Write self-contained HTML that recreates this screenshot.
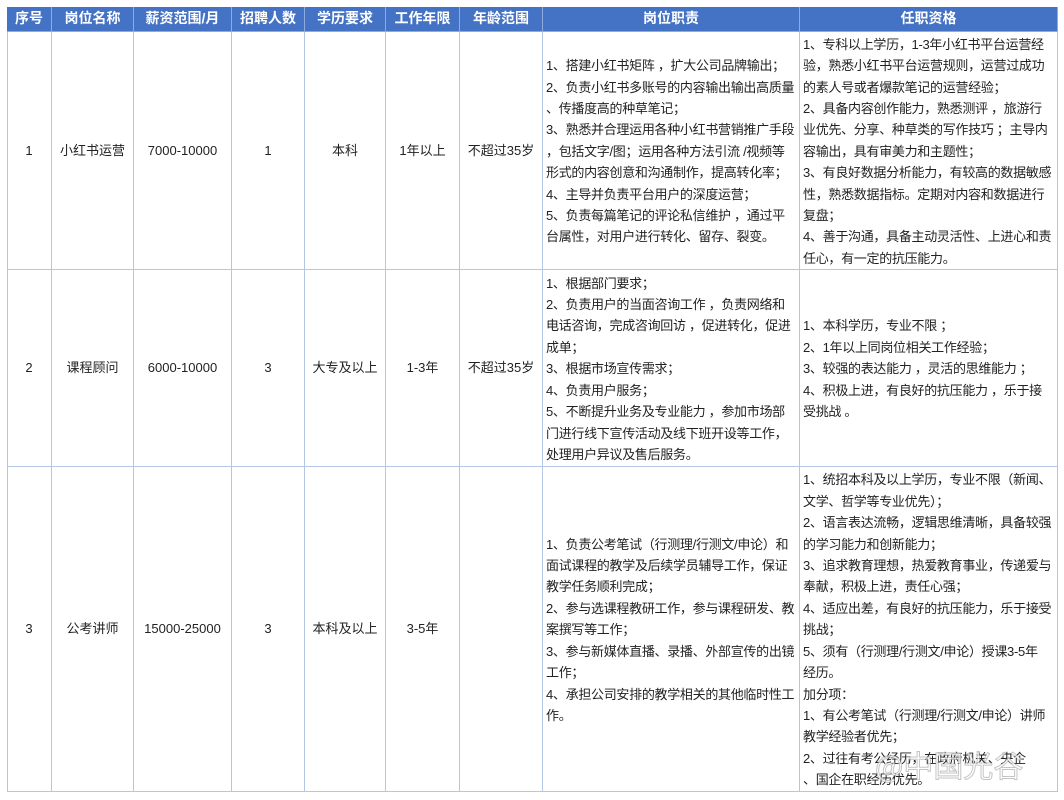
<!DOCTYPE html>
<html><head><meta charset="utf-8"><style>
body{margin:0;width:1064px;height:800px;background:#fff;position:relative;overflow:hidden;font-family:"Liberation Sans","Noto Sans CJK SC",sans-serif;color:#222}
.c{position:absolute;box-sizing:border-box;border-right:1px solid #b4c6e7;border-bottom:1px solid #b4c6e7;display:flex;align-items:center;font-size:13px;line-height:21.4px;white-space:nowrap;overflow:hidden}
.h{background:#4472c4;color:#fff;font-weight:bold;font-size:14px;justify-content:center;border-color:#8faadc}
.m{justify-content:center}
.t{padding-left:3px;letter-spacing:-0.3px;padding-top:2px}
.wm{position:absolute;left:875px;top:742px;font-size:30px;color:rgba(255,255,255,.7);-webkit-text-stroke:1px rgba(140,140,140,.5);white-space:nowrap;font-family:"Noto Sans CJK SC",sans-serif}
</style></head><body>
<div style="position:absolute;left:7px;top:7px;width:1051px;height:785px;border-left:1px solid #b4c6e7;border-top:1px solid #8faadc;box-sizing:border-box"></div>
<div class="c h" style="left:7px;top:7px;width:45px;height:25px">序号</div>
<div class="c h" style="left:52px;top:7px;width:82px;height:25px">岗位名称</div>
<div class="c h" style="left:134px;top:7px;width:98px;height:25px">薪资范围/月</div>
<div class="c h" style="left:232px;top:7px;width:73px;height:25px">招聘人数</div>
<div class="c h" style="left:305px;top:7px;width:81px;height:25px">学历要求</div>
<div class="c h" style="left:386px;top:7px;width:74px;height:25px">工作年限</div>
<div class="c h" style="left:460px;top:7px;width:83px;height:25px">年龄范围</div>
<div class="c h" style="left:543px;top:7px;width:257px;height:25px">岗位职责</div>
<div class="c h" style="left:800px;top:7px;width:258px;height:25px">任职资格</div>
<div class="c m" style="left:7px;top:32px;width:45px;height:238px">1</div>
<div class="c m" style="left:52px;top:32px;width:82px;height:238px">小红书运营</div>
<div class="c m" style="left:134px;top:32px;width:98px;height:238px">7000-10000</div>
<div class="c m" style="left:232px;top:32px;width:73px;height:238px">1</div>
<div class="c m" style="left:305px;top:32px;width:81px;height:238px">本科</div>
<div class="c m" style="left:386px;top:32px;width:74px;height:238px">1年以上</div>
<div class="c m" style="left:460px;top:32px;width:83px;height:238px">不超过35岁</div>
<div class="c t" style="left:543px;top:32px;width:257px;height:238px"><div>1、搭建小红书矩阵 ，扩大公司品牌输出；<br>2、负责小红书多账号的内容输出输出高质量<br>、传播度高的种草笔记；<br>3、熟悉并合理运用各种小红书营销推广手段<br>，包括文字/图；运用各种方法引流 /视频等<br>形式的内容创意和沟通制作，提高转化率；<br>4、主导并负责平台用户的深度运营；<br>5、负责每篇笔记的评论私信维护 ，通过平<br>台属性，对用户进行转化、留存、裂变。</div></div>
<div class="c t" style="left:800px;top:32px;width:258px;height:238px"><div>1、专科以上学历，1-3年小红书平台运营经<br>验，熟悉小红书平台运营规则，运营过成功<br>的素人号或者爆款笔记的运营经验；<br>2、具备内容创作能力，熟悉测评 ，旅游行<br>业优先、分享、种草类的写作技巧 ；主导内<br>容输出，具有审美力和主题性；<br>3、有良好数据分析能力，有较高的数据敏感<br>性，熟悉数据指标。定期对内容和数据进行<br>复盘；<br>4、善于沟通，具备主动灵活性、上进心和责<br>任心，有一定的抗压能力。</div></div>
<div class="c m" style="left:7px;top:270px;width:45px;height:197px">2</div>
<div class="c m" style="left:52px;top:270px;width:82px;height:197px">课程顾问</div>
<div class="c m" style="left:134px;top:270px;width:98px;height:197px">6000-10000</div>
<div class="c m" style="left:232px;top:270px;width:73px;height:197px">3</div>
<div class="c m" style="left:305px;top:270px;width:81px;height:197px">大专及以上</div>
<div class="c m" style="left:386px;top:270px;width:74px;height:197px">1-3年</div>
<div class="c m" style="left:460px;top:270px;width:83px;height:197px">不超过35岁</div>
<div class="c t" style="left:543px;top:270px;width:257px;height:197px"><div>1、根据部门要求；<br>2、负责用户的当面咨询工作 ，负责网络和<br>电话咨询，完成咨询回访 ，促进转化，促进<br>成单；<br>3、根据市场宣传需求；<br>4、负责用户服务；<br>5、不断提升业务及专业能力 ，参加市场部<br>门进行线下宣传活动及线下班开设等工作，<br>处理用户异议及售后服务。</div></div>
<div class="c t" style="left:800px;top:270px;width:258px;height:197px"><div>1、本科学历，专业不限 ；<br>2、1年以上同岗位相关工作经验；<br>3、较强的表达能力 ，灵活的思维能力 ；<br>4、积极上进，有良好的抗压能力 ，乐于接<br>受挑战 。</div></div>
<div class="c m" style="left:7px;top:467px;width:45px;height:325px">3</div>
<div class="c m" style="left:52px;top:467px;width:82px;height:325px">公考讲师</div>
<div class="c m" style="left:134px;top:467px;width:98px;height:325px">15000-25000</div>
<div class="c m" style="left:232px;top:467px;width:73px;height:325px">3</div>
<div class="c m" style="left:305px;top:467px;width:81px;height:325px">本科及以上</div>
<div class="c m" style="left:386px;top:467px;width:74px;height:325px">3-5年</div>
<div class="c m" style="left:460px;top:467px;width:83px;height:325px"></div>
<div class="c t" style="left:543px;top:467px;width:257px;height:325px"><div>1、负责公考笔试（行测理/行测文/申论）和<br>面试课程的教学及后续学员辅导工作，保证<br>教学任务顺利完成；<br>2、参与选课程教研工作，参与课程研发、教<br>案撰写等工作；<br>3、参与新媒体直播、录播、外部宣传的出镜<br>工作；<br>4、承担公司安排的教学相关的其他临时性工<br>作。</div></div>
<div class="c t" style="left:800px;top:467px;width:258px;height:325px"><div>1、统招本科及以上学历，专业不限（新闻、<br>文学、哲学等专业优先）；<br>2、语言表达流畅，逻辑思维清晰，具备较强<br>的学习能力和创新能力；<br>3、追求教育理想，热爱教育事业，传递爱与<br>奉献，积极上进，责任心强；<br>4、适应出差，有良好的抗压能力，乐于接受<br>挑战；<br>5、须有（行测理/行测文/申论）授课3-5年<br>经历。<br>加分项：<br>1、有公考笔试（行测理/行测文/申论）讲师<br>教学经验者优先；<br>2、过往有考公经历，在政府机关、央企<br>、国企在职经历优先。</div></div>
<div class="wm">@中国光谷</div>
</body></html>
